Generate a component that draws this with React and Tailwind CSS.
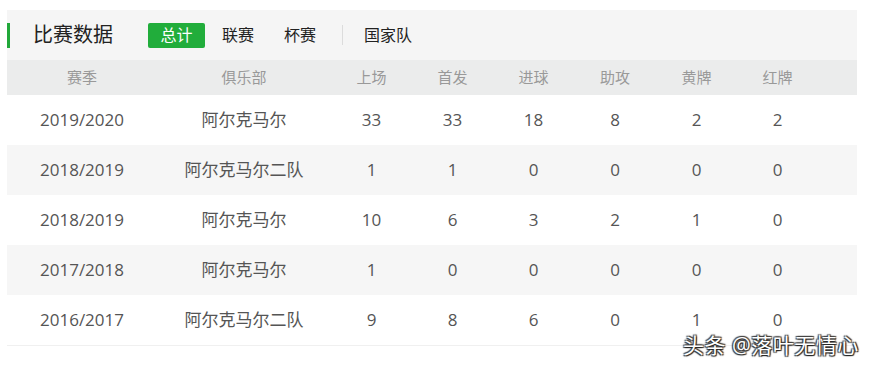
const columns = ["赛季", "俱乐部", "上场", "首发", "进球", "助攻", "黄牌", "红牌"];

const rows = [
  ["2019/2020", "阿尔克马尔", 33, 33, 18, 8, 2, 2],
  ["2018/2019", "阿尔克马尔二队", 1, 1, 0, 0, 0, 0],
  ["2018/2019", "阿尔克马尔", 10, 6, 3, 2, 1, 0],
  ["2017/2018", "阿尔克马尔", 1, 0, 0, 0, 0, 0],
  ["2016/2017", "阿尔克马尔二队", 9, 8, 6, 0, 1, 0],
];

const widths = ["w-[150px]", "w-[174px]", "w-[81px]", "w-[81px]", "w-[81px]", "w-[82px]", "w-[81px]", "w-[81px]"];

export default function App() {
  return (
    <div
      className="relative w-[875px] h-[369px] bg-white pt-[10px] pl-[7px]"
      style={{ fontFamily: '"Open Sans", "Noto Sans CJK SC", sans-serif' }}
    >
      <div className="w-[850px]">
        {/* title bar */}
        <div className="h-[50px] bg-[#f5f5f5] flex items-center">
          <div className="w-[3px] h-[25px] bg-[#22a83a]" />
          <h1 className="ml-[23px] text-[20px] text-[#222] leading-none">比赛数据</h1>
          <div className="ml-[35px] flex items-center text-[16px] text-[#222]">
            <span className="w-[57px] h-[25px] rounded-[2px] bg-[#21ad3b] text-white flex items-center justify-center">
              总计
            </span>
            <span className="ml-[17px]">联赛</span>
            <span className="ml-[30px]">杯赛</span>
            <span className="ml-[26px] w-px h-[20px] bg-[#dcdcdc]" />
            <span className="ml-[21px]">国家队</span>
          </div>
        </div>

        {/* column header */}
        <div className="h-[35px] bg-[#ebecec] flex items-center">
          {columns.map((c, i) => (
            <div key={c} className={`${widths[i]} text-center text-[15px] text-[#999]`}>
              {c}
            </div>
          ))}
        </div>

        {/* rows */}
        <div className="border-b border-[#f0f0f0]">
          {rows.map((r, ri) => (
            <div
              key={ri}
              className={`h-[50px] flex items-center ${ri % 2 === 1 ? "bg-[#f6f6f6]" : "bg-white"}`}
            >
              {r.map((v, i) => (
                <div key={i} className={`${widths[i]} text-center text-[17px] text-[#555]`}>
                  {v}
                </div>
              ))}
            </div>
          ))}
        </div>
      </div>

      {/* watermark */}
      <div
        className="absolute left-[683px] top-[330px] text-[21px] text-white tracking-[0.5px]"
        style={{ textShadow: "1px 1px 1px #222, -1px -1px 1px #444, 1px -1px 1px #333, -1px 1px 1px #333" }}
      >
        头条 @落叶无情心
      </div>
    </div>
  );
}
